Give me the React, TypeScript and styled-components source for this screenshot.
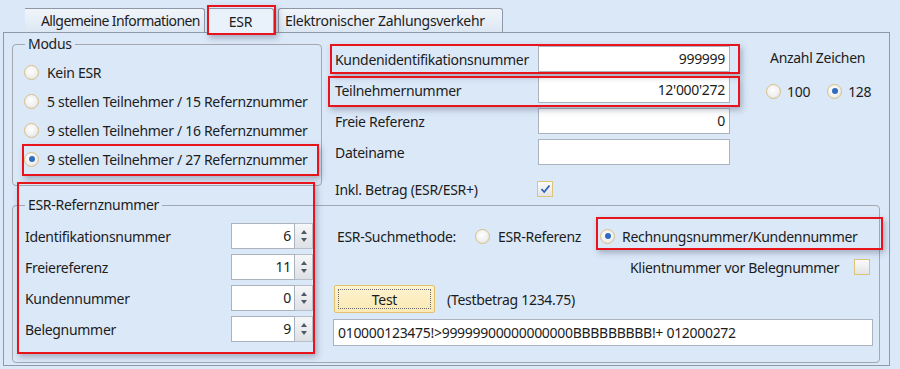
import React from 'react';
import styled, { createGlobalStyle } from 'styled-components';

const GlobalStyle = createGlobalStyle`
  html, body {
    margin: 0;
    padding: 0;
  }
  body {
    background: #dbe8f8;
    font-family: "Noto Sans", "Open Sans", Arial, sans-serif;
    color: #1c1c1c;
  }
`;

const Screen = styled.div`
  width: 900px;
  height: 369px;
  overflow: hidden;
  background: #dbe8f8;
  font-size: 14px;
  letter-spacing: -0.3px;
`;

const TabStrip = styled.div`
  display: flex;
  align-items: flex-end;
  height: 32px;
  padding-left: 3px;
  position: relative;
  z-index: 2;
`;

const Tab = styled.div<{ $active?: boolean; $width: number; $slanted?: boolean; $gap?: number }>`
  position: relative;
  box-sizing: border-box;
  width: ${(p) => p.$width}px;
  height: ${(p) => (p.$active ? 25 : 24)}px;
  margin-left: ${(p) => p.$gap ?? 0}px;
  margin-bottom: ${(p) => (p.$active ? -1 : 0)}px;
  padding: ${(p) => (p.$slanted ? '0 0 0 16px' : '0 6px')};
  display: flex;
  align-items: center;
  justify-content: ${(p) => (p.$active ? 'center' : 'flex-start')};
  border: 1px solid #8d99a8;
  border-bottom: none;
  border-left: ${(p) => (p.$slanted ? 'none' : '1px solid #8d99a8')};
  border-radius: ${(p) => (p.$slanted ? '0 3px 0 0' : '3px 3px 0 0')};
  background: ${(p) => (p.$active ? '#e9f1fb' : 'linear-gradient(#f1f5fa, #dce7f4)')};
  letter-spacing: ${(p) => (p.$slanted ? '-0.6px' : '-0.3px')};
  white-space: nowrap;

  &::before {
    content: '';
    display: ${(p) => (p.$slanted ? 'block' : 'none')};
    position: absolute;
    left: 0;
    top: -1px;
    bottom: 0;
    width: 20px;
    border-left: 1px solid #8d99a8;
    border-top: 1px solid #8d99a8;
    background: linear-gradient(#f1f5fa, #dce7f4);
    transform: skewX(-40deg);
    transform-origin: bottom left;
    z-index: -1;
  }
`;

const Panel = styled.div`
  box-sizing: border-box;
  margin-left: 3px;
  width: 887px;
  height: 334px;
  border: 1px solid #8f9aa7;
  padding: 3px 8px 0 8px;
`;

const TopArea = styled.div`
  display: flex;
  align-items: flex-start;
`;

const Group = styled.fieldset<{ $width: number; $height: number }>`
  box-sizing: border-box;
  width: ${(p) => p.$width}px;
  height: ${(p) => p.$height}px;
  margin: 0;
  padding: 0;
  border: 1px solid #a3a8b0;
  border-radius: 4px;
  min-width: 0;
`;

const Legend = styled.legend`
  margin-left: 12px;
  padding: 0 3px;
  line-height: 16px;
`;

const ModusList = styled.div`
  display: flex;
  flex-direction: column;
  gap: 9px;
  padding: 10px 0 0 11px;
`;

const RadioLabel = styled.div<{ $gap?: number }>`
  display: flex;
  align-items: center;
  gap: ${(p) => p.$gap ?? 8}px;
  height: 20px;
  white-space: nowrap;
`;

const RadioCircle = styled.span<{ $checked?: boolean }>`
  box-sizing: border-box;
  flex: none;
  width: 15px;
  height: 15px;
  border-radius: 50%;
  border: 1px solid #d9c084;
  background: radial-gradient(circle at 45% 40%, #ffffff 0%, #f0f0f0 55%, #d8d8d8 100%);
  display: inline-flex;
  align-items: center;
  justify-content: center;

  &::after {
    content: '';
    display: ${(p) => (p.$checked ? 'block' : 'none')};
    width: 6px;
    height: 6px;
    border-radius: 50%;
    background: #2d6cc0;
  }
`;

const Highlight = styled.div<{ $t: number; $r: number; $b: number; $l: number }>`
  position: relative;

  &::after {
    content: '';
    position: absolute;
    top: ${(p) => -p.$t}px;
    right: ${(p) => -p.$r}px;
    bottom: ${(p) => -p.$b}px;
    left: ${(p) => -p.$l}px;
    border: 2px solid #e8141c;
    box-shadow: 2px 3px 6px rgba(60, 70, 90, 0.35);
    pointer-events: none;
    z-index: 5;
  }
`;

const FieldsColumn = styled.div`
  display: flex;
  flex-direction: column;
  gap: 5px;
  margin: 10px 0 0 13px;
`;

const FieldRow = styled.div`
  display: flex;
  align-items: center;
  height: 26px;
`;

const FieldLabel = styled.div<{ $width: number }>`
  width: ${(p) => p.$width}px;
  white-space: nowrap;
`;

const TextBox = styled.div<{ $width: number; $height?: number; $left?: boolean }>`
  box-sizing: border-box;
  width: ${(p) => p.$width}px;
  height: ${(p) => p.$height ?? 26}px;
  line-height: ${(p) => (p.$height ?? 26) - 2}px;
  border: 1px solid #abb3bf;
  background: #ffffff;
  text-align: ${(p) => (p.$left ? 'left' : 'right')};
  padding: 0 4px;
  white-space: nowrap;
`;

const CheckRow = styled.div`
  display: flex;
  align-items: center;
  height: 16px;
  margin-top: 11px;
`;

const CheckBox = styled.span`
  box-sizing: border-box;
  flex: none;
  width: 16px;
  height: 16px;
  border: 1px solid #dfc27a;
  background: linear-gradient(#fbfbfb, #e4e4e4);
  display: inline-flex;
  align-items: center;
  justify-content: center;
`;

const CountColumn = styled.div`
  display: flex;
  flex-direction: column;
  gap: 13px;
  margin: 12px 0 0 36px;
`;

const CountTitle = styled.div`
  height: 20px;
  line-height: 20px;
  padding-left: 4px;
`;

const CountOptions = styled.div`
  display: flex;
  gap: 17px;
`;

const BottomGroupBody = styled.div`
  display: flex;
  gap: 20px;
  padding-left: 12px;
`;

const RefRows = styled.div`
  display: flex;
  flex-direction: column;
  gap: 5px;
  width: 288px;
  margin-top: 10px;
`;

const RefRow = styled.div`
  display: flex;
  align-items: center;
  justify-content: space-between;
  height: 26px;
`;

const Spinner = styled.div`
  display: flex;
  width: 82px;
  height: 26px;
`;

const SpinValue = styled.div`
  box-sizing: border-box;
  flex: 1;
  border: 1px solid #abb3bf;
  background: #ffffff;
  text-align: right;
  line-height: 24px;
  padding-right: 3px;
`;

const SpinButtons = styled.div`
  box-sizing: border-box;
  width: 18px;
  border: 1px solid #b7bec8;
  border-left: none;
  background: linear-gradient(#f6f7f8, #dde0e4);
  display: flex;
  flex-direction: column;
  align-items: center;
  justify-content: center;
  gap: 4px;
`;

const Arrow = styled.span<{ $down?: boolean }>`
  width: 0;
  height: 0;
  border-left: 3.5px solid transparent;
  border-right: 3.5px solid transparent;
  border-top: ${(p) => (p.$down ? '4px solid #505866' : 'none')};
  border-bottom: ${(p) => (p.$down ? 'none' : '4px solid #505866')};
`;

const SearchColumn = styled.div`
  display: flex;
  flex-direction: column;
  width: 540px;
`;

const SearchRow = styled.div`
  display: flex;
  align-items: center;
  height: 20px;
  margin-top: 13px;
  padding-left: 4px;
`;

const SearchLabel = styled.div<{ $width: number }>`
  width: ${(p) => p.$width}px;
  white-space: nowrap;
`;

const ClientRow = styled.div`
  display: flex;
  align-items: center;
  justify-content: space-between;
  height: 20px;
  margin-top: 11px;
  padding: 0 3px 0 297px;
`;

const TestRow = styled.div`
  display: flex;
  align-items: center;
  gap: 12px;
  margin-top: 8px;
  padding-left: 1px;
`;

const TestButton = styled.div`
  box-sizing: border-box;
  width: 101px;
  height: 28px;
  border: 1px solid #e3c06a;
  border-radius: 2px;
  background: linear-gradient(#fdf3cf, #fbe9b4);
  padding: 3px;

  & > span {
    box-sizing: border-box;
    display: flex;
    align-items: center;
    justify-content: center;
    height: 100%;
    border: 1px dotted #6a6a6a;
  }
`;

const CodeRow = styled.div`
  margin-top: 6px;
`;

const Radio = ({ checked, children, gap }: { checked?: boolean; children: React.ReactNode; gap?: number }) => (
  <RadioLabel $gap={gap}>
    <RadioCircle $checked={checked} />
    <span>{children}</span>
  </RadioLabel>
);

const Check = ({ checked }: { checked?: boolean }) => (
  <CheckBox>
    {checked && (
      <svg width="11" height="10" viewBox="0 0 11 10">
        <path d="M1.5 5.2 L4.2 8 L9.5 1.5" fill="none" stroke="#2b62b4" strokeWidth="1.8" />
      </svg>
    )}
  </CheckBox>
);

const Spin = ({ value }: { value: string }) => (
  <Spinner>
    <SpinValue>{value}</SpinValue>
    <SpinButtons>
      <Arrow />
      <Arrow $down />
    </SpinButtons>
  </Spinner>
);

const refRows = [
  { label: 'Identifikationsnummer', value: '6' },
  { label: 'Freiereferenz', value: '11' },
  { label: 'Kundennummer', value: '0' },
  { label: 'Belegnummer', value: '9' },
];

const App = () => {
  return (
    <Screen>
      <GlobalStyle />
      <TabStrip>
        <Tab $width={180} $slanted $gap={22}>
          Allgemeine Informationen
        </Tab>
        <Highlight $t={3} $r={2} $b={3} $l={0} style={{ marginLeft: 2 }}>
          <Tab $width={67} $active>
            ESR
          </Tab>
        </Highlight>
        <Tab $width={225} $gap={4}>
          Elektronischer Zahlungsverkehr
        </Tab>
      </TabStrip>
      <Panel>
        <TopArea>
          <Group $width={310} $height={150}>
            <Legend>Modus</Legend>
            <ModusList>
              <Radio>Kein ESR</Radio>
              <Radio>5 stellen Teilnehmer / 15 Refernznummer</Radio>
              <Radio>9 stellen Teilnehmer / 16 Refernznummer</Radio>
              <Highlight $t={5} $r={-2} $b={7} $l={2}>
                <Radio checked>9 stellen Teilnehmer / 27 Refernznummer</Radio>
              </Highlight>
            </ModusList>
          </Group>
          <FieldsColumn>
            <Highlight $t={2} $r={10} $b={2} $l={5}>
              <FieldRow>
                <FieldLabel $width={203}>Kundenidentifikationsnummer</FieldLabel>
                <TextBox $width={192}>999999</TextBox>
              </FieldRow>
            </Highlight>
            <Highlight $t={1} $r={10} $b={4} $l={7}>
              <FieldRow>
                <FieldLabel $width={203}>Teilnehmernummer</FieldLabel>
                <TextBox $width={192}>12'000'272</TextBox>
              </FieldRow>
            </Highlight>
            <FieldRow>
              <FieldLabel $width={203}>Freie Referenz</FieldLabel>
              <TextBox $width={192}>0</TextBox>
            </FieldRow>
            <FieldRow>
              <FieldLabel $width={203}>Dateiname</FieldLabel>
              <TextBox $width={192} />
            </FieldRow>
            <CheckRow>
              <FieldLabel $width={202}>Inkl. Betrag (ESR/ESR+)</FieldLabel>
              <Check checked />
            </CheckRow>
          </FieldsColumn>
          <CountColumn>
            <CountTitle>Anzahl Zeichen</CountTitle>
            <CountOptions>
              <Radio gap={6}>100</Radio>
              <Radio gap={6} checked>
                128
              </Radio>
            </CountOptions>
          </CountColumn>
        </TopArea>
        <Group $width={868} $height={166}>
          <Legend>ESR-Refernznummer</Legend>
          <BottomGroupBody>
            <Highlight $t={31} $r={2} $b={8} $l={8}>
              <RefRows>
                {refRows.map((r) => (
                  <RefRow key={r.label}>
                    <span>{r.label}</span>
                    <Spin value={r.value} />
                  </RefRow>
                ))}
              </RefRows>
            </Highlight>
            <SearchColumn>
              <SearchRow>
                <SearchLabel $width={138}>ESR-Suchmethode:</SearchLabel>
                <SearchLabel $width={125}>
                  <Radio>ESR-Referenz</Radio>
                </SearchLabel>
                <Highlight $t={9} $r={25} $b={4} $l={4}>
                  <Radio gap={7} checked>
                    Rechnungsnummer/Kundennummer
                  </Radio>
                </Highlight>
              </SearchRow>
              <ClientRow>
                <span>Klientnummer vor Belegnummer</span>
                <Check />
              </ClientRow>
              <TestRow>
                <TestButton>
                  <span>Test</span>
                </TestButton>
                <span>(Testbetrag 1234.75)</span>
              </TestRow>
              <CodeRow>
                <TextBox $width={540} $height={27} $left>
                  010000123475!&gt;99999900000000000BBBBBBBBB!+ 012000272
                </TextBox>
              </CodeRow>
            </SearchColumn>
          </BottomGroupBody>
        </Group>
      </Panel>
    </Screen>
  );
};

export default App;
